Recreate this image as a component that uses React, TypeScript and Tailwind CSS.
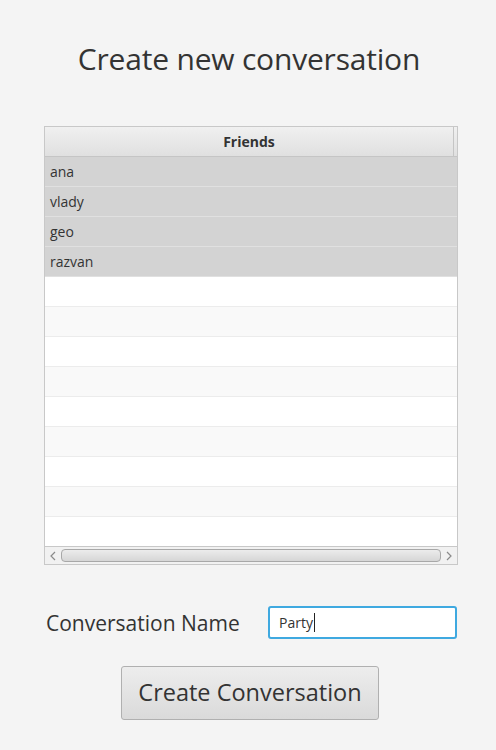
import React from "react";

const friends = ["ana", "vlady", "geo", "razvan"];
const emptyRows = 9;

function ScrollBar() {
  return (
    <div className="flex h-[18px] items-center border-t border-[#c8c8c8] bg-[#f1f1f1]">
      <div className="flex w-[16px] items-center justify-center">
        <svg width="6" height="10" viewBox="0 0 6 10">
          <path d="M5 1 L1 5 L5 9" fill="none" stroke="#8a8a8a" strokeWidth="1.2" />
        </svg>
      </div>
      <div className="h-[13px] flex-1 rounded-[4px] border border-[#a8a8a8] bg-gradient-to-b from-[#ececec] to-[#d6d6d6]" />
      <div className="flex w-[16px] items-center justify-center">
        <svg width="6" height="10" viewBox="0 0 6 10">
          <path d="M1 1 L5 5 L1 9" fill="none" stroke="#8a8a8a" strokeWidth="1.2" />
        </svg>
      </div>
    </div>
  );
}

export default function App() {
  return (
    <main
      className="flex h-[750px] w-[496px] flex-col bg-[#f4f4f4] text-[#333333]"
      style={{ fontFamily: '"Open Sans", "Noto Sans", sans-serif' }}
    >
      <h1 className="mt-[39px] pl-[2px] text-center text-[30px] leading-[40px] tracking-[-0.2px] text-[#333333]">
        Create new conversation
      </h1>

      <div className="ml-[44px] mt-[47px] flex h-[439px] w-[414px] flex-col border border-[#c8c8c8] bg-white">
        <div className="flex h-[30px] border-b border-[#c5c5c5] bg-gradient-to-b from-[#f0f0f0] to-[#e0e0e0]">
          <div className="flex flex-1 items-center justify-center border-r border-[#c5c5c5] text-[14px] font-bold text-[#333333]">
            Friends
          </div>
          <div className="w-[3px]" />
        </div>
        <div className="flex flex-1 flex-col overflow-hidden">
          {friends.map((name) => (
            <div
              key={name}
              className="flex h-[30px] shrink-0 items-center border-b border-[#e0e0e0] bg-[#d3d3d3] pl-[5px] text-[14px] text-[#333333]"
            >
              {name}
            </div>
          ))}
          {Array.from({ length: emptyRows }).map((_, i) => (
            <div
              key={i}
              className={
                "h-[30px] shrink-0 border-b border-[#ececec] " +
                (i % 2 === 0 ? "bg-white" : "bg-[#f9f9f9]")
              }
            />
          ))}
        </div>
        <ScrollBar />
      </div>

      <div className="ml-[46px] mt-[41px] flex w-[411px] items-center justify-between">
        <span className="text-[21px] leading-[28px] text-[#333333]">Conversation Name</span>
        <div className="flex h-[33px] w-[189px] items-center rounded-[3px] border-2 border-[#3fa9e0] bg-white pl-[9px] text-[14px] text-[#333333]">
          Party
          <span className="ml-[1px] inline-block h-[19px] w-[1px] bg-[#222222]" />
        </div>
      </div>

      <button className="ml-[121px] mt-[27px] h-[54px] w-[258px] rounded-[3px] border border-[#b0b0b0] bg-gradient-to-b from-[#ededed] to-[#dadada] text-[23.5px] text-[#333333]">
        Create Conversation
      </button>
    </main>
  );
}
